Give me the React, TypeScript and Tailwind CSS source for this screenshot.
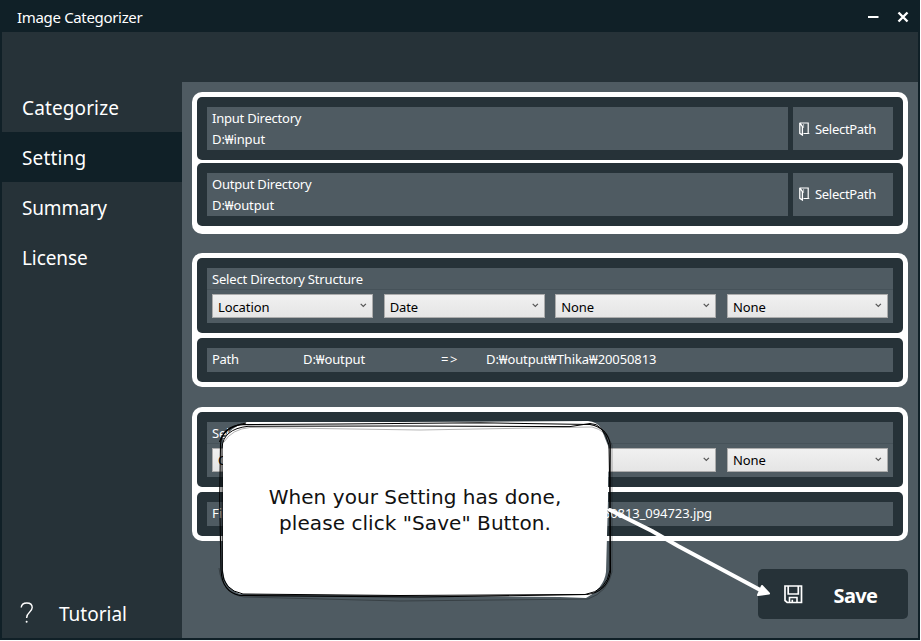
import type { ReactNode } from "react";

const nav = [
  { label: "Categorize", active: false, spacing: "tracking-[0.12px]" },
  { label: "Setting", active: true, spacing: "tracking-[0.15px]" },
  { label: "Summary", active: false, spacing: "tracking-[-0.15px]" },
  { label: "License", active: false, spacing: "tracking-[-0.1px]" },
];

function Chevron() {
  return (
    <svg width="7" height="5" viewBox="0 0 7 5" className="mt-[-1px] shrink-0">
      <path d="M0.7 0.8 L3.3 3.4 L5.9 0.8" fill="none" stroke="#555" strokeWidth="1.2" />
    </svg>
  );
}

function FolderIcon() {
  return (
    <svg width="11" height="14" viewBox="0 0 11 14" className="shrink-0">
      <path d="M0.5 1 H9.2 V11.5 H4.5" fill="none" stroke="#fff" strokeWidth="1.2" />
      <path d="M0.8 1 V11.3 L3.4 13 V4.5 L1 1.2" fill="none" stroke="#fff" strokeWidth="1.3" />
      <path d="M4.6 2 V6 M7.5 11.5 H10.5" fill="none" stroke="#fff" strokeOpacity="0.6" strokeWidth="1" />
    </svg>
  );
}

function DirectoryRow({ label, path, className }: { label: string; path: string; className: string }) {
  return (
    <div className={`flex gap-[5px] rounded-[5px] bg-[#263238] px-[10px] ${className}`}>
      <div className="h-[43px] w-[581px] bg-[#4f5b62] pl-[5px] leading-[21px]">
        <div className="pt-px tracking-[-0.23px]">{label}</div>
        <div>{path}</div>
      </div>
      <button className="flex h-[43px] w-[100px] items-center gap-[5px] bg-[#4f5b62] pl-[6px]">
        <FolderIcon />
        <span className="pt-[2px] tracking-[-0.3px]">SelectPath</span>
      </button>
    </div>
  );
}

function Select({ value, textClass }: { value: string; textClass: string }) {
  return (
    <div className="flex h-[24px] w-[161px] items-center justify-between border border-[#acacac] bg-linear-to-b from-[#f0f0f0] to-[#e5e5e5] pr-[5px] pl-[5px] text-black">
      <span className={textClass}>{value}</span>
      <Chevron />
    </div>
  );
}

function Group({ title, options, textClass, children }: { title: string; options: string[]; textClass: string; children: ReactNode }) {
  return (
    <section className="flex h-[134px] flex-col gap-[5px] rounded-[10px] bg-white p-[5px]">
      <div className="h-[74.5px] rounded-[5px] bg-[#263238] p-[10px]">
        <div className="h-[54.5px] bg-[#4f5b62] px-[5px]">
          <div className="-mx-[5px] h-[22px] border-b border-[#465259] pl-[5px] leading-[23px] tracking-[-0.18px]">{title}</div>
          <div className="mt-[4px] flex justify-between">
            {options.map((option, i) => (
              <Select key={i} value={option} textClass={textClass} />
            ))}
          </div>
        </div>
      </div>
      <div className="h-[44.5px] rounded-[5px] bg-[#263238] p-[10px]">
        <div className="flex h-[24.5px] items-center bg-[#4f5b62] pl-[5px]">{children}</div>
      </div>
    </section>
  );
}

function Callout() {
  return (
    <>
      <svg className="absolute top-0 left-0" width="920" height="640" viewBox="0 0 920 640">
        <path d="M223 440 Q230 427 247 422 L400 422 L588 421 Q597 422 601 428 L608.5 447 L608 500 L606 572 Q604 588 586 598 L560 597 L240 594 Q224 588 223 570 Z" fill="#fff" />
        <g fill="none" stroke="#000">
          <path d="M220.5 444 Q222 426 243 424.6 L340 424 L480 422.8 L590 424.5 Q608 428 610.3 445 L610 500 L610.5 572 Q607 592 587 594.5 L420 597 L240 595.5 Q222 592 221 570 L219.7 500 Z" strokeWidth="1.1" />
          <path d="M222 448 Q223 429 248 426.3 L400 426 L570 426.6 L590 423.5 Q603 423 609 445 L610 500 L610 570 Q607 591 585 594.5 L400 595.5 L243 594 Q223 590 222.3 571 Z" strokeWidth="1" />
          <path d="M219.5 442 Q224 427 246 423" strokeWidth="1.2" />
          <path d="M224 442 Q232 429 250 427.5 L420 430 L592 427 Q606 430 612 445 L612 572 Q608 592 588 599 L400 601 L244 597 Q222 594 219 568" strokeOpacity="0.3" strokeWidth="1" />
        </g>
        <path d="M610 510 L652 531 L678 546 L764 592" fill="none" stroke="#fff" strokeWidth="4" strokeLinecap="round" />
        <path d="M762 586 L769 593.5 L758 595 Z" fill="#fff" stroke="#fff" strokeWidth="2" strokeLinejoin="round" />
      </svg>
      <div className="absolute top-[484px] left-[222px] w-[386px] text-center font-['DejaVu_Sans',Verdana,sans-serif] text-[20px] leading-[26px] tracking-[0.06px] text-[#111]">
        When your Setting has done,
        <br />
        please click "Save" Button.
      </div>
    </>
  );
}

export default function App() {
  return (
    <div className="h-[641px] w-[921px] overflow-hidden bg-white">
      <div className="relative flex h-[640px] w-[920px] flex-col bg-[#102027] pr-[2px] pb-[2px] pl-[2px] font-['Noto_Sans','Noto_Sans_CJK_KR',sans-serif] text-[13px] tracking-[-0.1px] text-white">
        <header className="flex h-[32px] shrink-0 items-center justify-between pr-[9px] pl-[15px]">
          <span className="pt-[3px] text-[15px] tracking-[-0.33px]">Image Categorizer</span>
          <svg width="42" height="12" viewBox="0 0 42 12" className="mt-[2px]">
            <path d="M1 6 H11.5" stroke="#fff" strokeWidth="2" />
            <path d="M31.5 1.5 L40.5 10.5 M40.5 1.5 L31.5 10.5" stroke="#fff" strokeWidth="2.4" />
          </svg>
        </header>
        <div className="flex min-h-0 flex-1 bg-[#263238]">
          <nav className="flex w-[180px] flex-col pt-[50px] text-[19px]">
            {nav.map((item) => (
              <a key={item.label} className={`flex h-[50px] items-center pl-[20px] pt-[2px] ${item.spacing} ${item.active ? "bg-[#102027]" : ""}`}>
                {item.label}
              </a>
            ))}
            <a className="mt-auto flex h-[50px] items-center pl-[18px]">
              <svg width="14" height="22" viewBox="0 0 14 22">
                <path d="M1.2 5.5 C1.5 2.3 4 1 6.8 1 C10 1 12.2 2.8 12.2 5.6 C12.2 10 6.6 10 6.6 16" fill="none" stroke="#fff" strokeWidth="1.4" />
                <circle cx="6.6" cy="19.7" r="1" fill="#fff" />
              </svg>
              <span className="pt-[3px] pl-[25px] tracking-normal">Tutorial</span>
            </a>
          </nav>
          <main className="mt-[50px] flex flex-1 flex-col bg-[#4f5b62] p-[10px]">
            <section className="flex h-[141.5px] flex-col gap-[3px] rounded-[10px] bg-white p-[5px]">
              <DirectoryRow label="Input Directory" path="D:₩input" className="h-[62.5px] pt-[10px]" />
              <DirectoryRow label="Output Directory" path="D:₩output" className="h-[63px] pt-[10px]" />
            </section>
            <div className="mt-[19.5px]">
              <Group title="Select Directory Structure" options={["Location", "Date", "None", "None"]} textClass="pt-[3px]">
                <span className="w-[91px] tracking-[-0.3px]">Path</span>
                <span className="w-[138px]">D:₩output</span>
                <span className="w-[45px] tracking-[1.5px]">=&gt;</span>
                <span>D:₩output₩Thika₩20050813</span>
              </Group>
            </div>
            <div className="mt-[20px]">
              <Group title="Select FileName Structure" options={["Origin", "Date", "None", "None"]} textClass="pt-px">
                <span className="w-[91px]">File</span>
                <span className="flex-1" />
                <span className="mr-[181px] w-[290px] text-right tracking-[-0.08px]">20050813_094723.jpg</span>
              </Group>
            </div>
            <button className="mt-[28px] flex h-[50px] w-[150px] items-center self-end rounded-[5px] bg-[#263238] pl-[26px]">
              <svg width="19" height="19" viewBox="0 0 19 19" className="mt-px">
                <path d="M1 1 H17.5 V17.5 H3.2 L1 15.5 Z M4.2 1 V9 H14.3 V1" fill="none" stroke="#fff" strokeWidth="1.7" />
                <path d="M5.5 17.5 V12.5 H13 V17.5 M8.3 17.5 V14.8" fill="none" stroke="#fff" strokeWidth="1.6" />
              </svg>
              <span className="pt-[3px] pl-[30.5px] text-[20px] font-bold tracking-[-0.6px]">Save</span>
            </button>
          </main>
        </div>
        <Callout />
      </div>
    </div>
  );
}
